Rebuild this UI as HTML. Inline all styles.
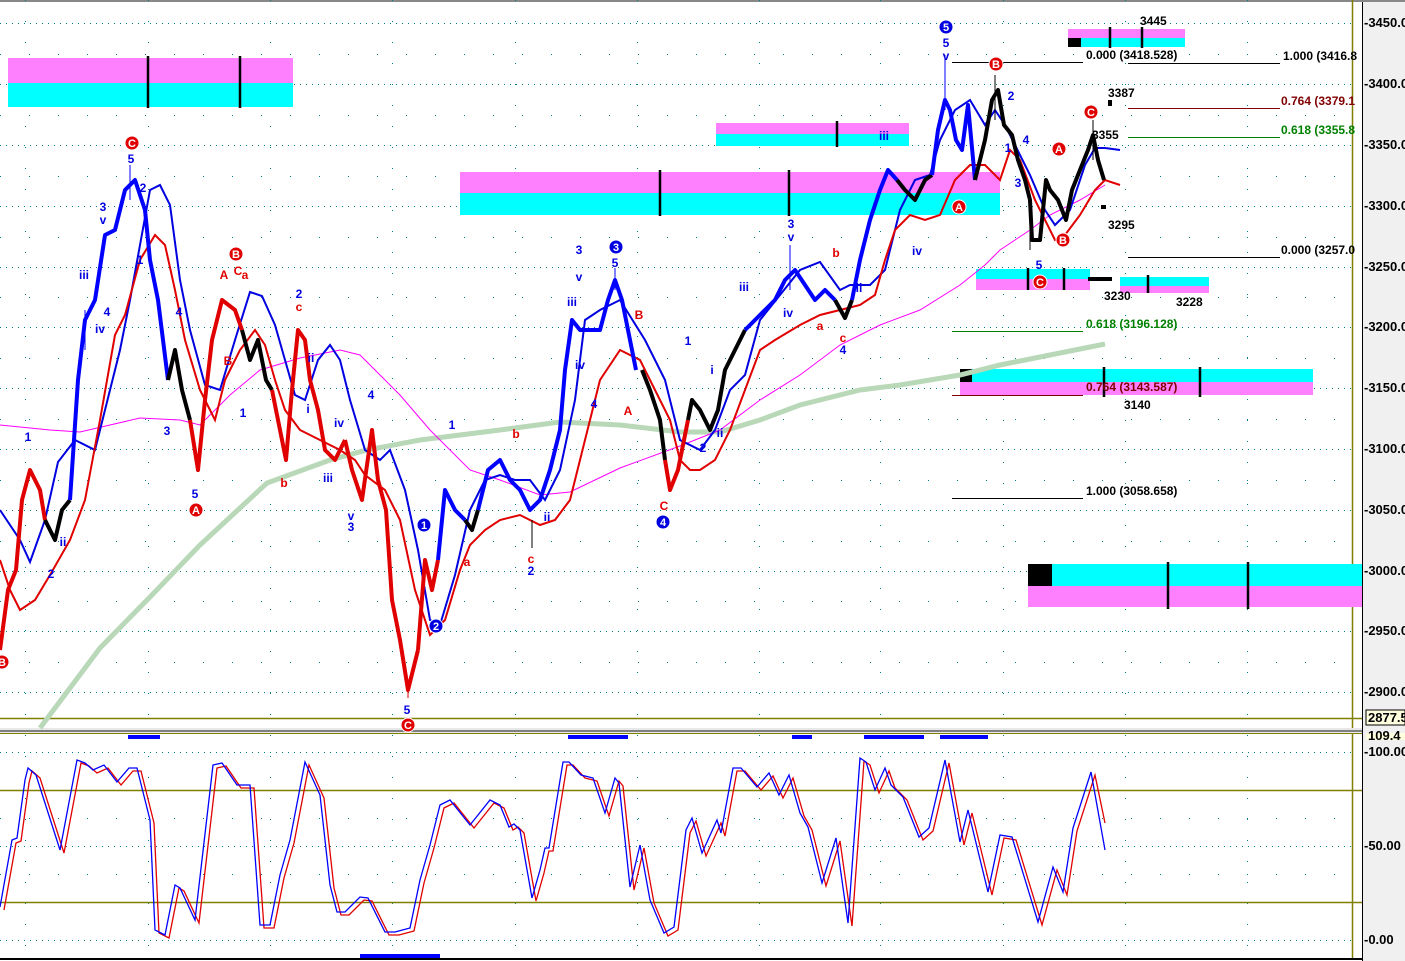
<!DOCTYPE html>
<html><head><meta charset="utf-8"><style>
html,body{margin:0;padding:0;background:#fff;}
svg{display:block;}
text{font-family:"Liberation Sans",sans-serif;font-weight:bold;}
</style></head><body>
<svg width="1405" height="961" viewBox="0 0 1405 961" xmlns="http://www.w3.org/2000/svg">
<rect x="0" y="0" width="1405" height="961" fill="#fff"/>
<rect x="1362" y="0" width="43" height="961" fill="#f0f0f0"/>
<line x1="1362.5" y1="0" x2="1362.5" y2="961" stroke="#000"/>
<line x1="0" y1="1" x2="1405" y2="1" stroke="#888" stroke-width="2"/>
<g stroke="#008080" stroke-dasharray="1,5" stroke-width="1">
<line x1="0" y1="23.5" x2="1352" y2="23.5"/><line x1="0" y1="84.5" x2="1352" y2="84.5"/>
<line x1="0" y1="145.5" x2="1352" y2="145.5"/><line x1="0" y1="206.5" x2="1352" y2="206.5"/>
<line x1="0" y1="267.5" x2="1352" y2="267.5"/><line x1="0" y1="327.5" x2="1352" y2="327.5"/>
<line x1="0" y1="388.5" x2="1352" y2="388.5"/><line x1="0" y1="449.5" x2="1352" y2="449.5"/>
<line x1="0" y1="510.5" x2="1352" y2="510.5"/><line x1="0" y1="571.5" x2="1352" y2="571.5"/>
<line x1="0" y1="631.5" x2="1352" y2="631.5"/><line x1="0" y1="692.5" x2="1352" y2="692.5"/>
<line x1="0" y1="752.5" x2="1352" y2="752.5"/><line x1="0" y1="846.5" x2="1352" y2="846.5"/><line x1="0" y1="940.5" x2="1352" y2="940.5"/>
</g>
<g stroke="#008080" stroke-dasharray="1,28" stroke-width="1">
<line x1="0" y1="54.5" x2="1352" y2="54.5"/><line x1="0" y1="115.5" x2="1352" y2="115.5"/><line x1="0" y1="176.5" x2="1352" y2="176.5"/>
<line x1="0" y1="237.5" x2="1352" y2="237.5"/><line x1="0" y1="297.5" x2="1352" y2="297.5"/><line x1="0" y1="358.5" x2="1352" y2="358.5"/>
<line x1="0" y1="419.5" x2="1352" y2="419.5"/><line x1="0" y1="480.5" x2="1352" y2="480.5"/><line x1="0" y1="541.5" x2="1352" y2="541.5"/>
<line x1="0" y1="601.5" x2="1352" y2="601.5"/><line x1="0" y1="662.5" x2="1352" y2="662.5"/>
<line x1="0" y1="818.5" x2="1352" y2="818.5"/><line x1="0" y1="874.5" x2="1352" y2="874.5"/>
</g>
<g stroke="#008080" stroke-dasharray="1,20" stroke-width="1">
<line x1="25.5" y1="0" x2="25.5" y2="958"/><line x1="148.5" y1="0" x2="148.5" y2="958"/><line x1="270.5" y1="0" x2="270.5" y2="958"/>
<line x1="392.5" y1="0" x2="392.5" y2="958"/><line x1="515.5" y1="0" x2="515.5" y2="958"/><line x1="637.5" y1="0" x2="637.5" y2="958"/>
<line x1="759.5" y1="0" x2="759.5" y2="958"/><line x1="880.5" y1="0" x2="880.5" y2="958"/><line x1="1003.5" y1="0" x2="1003.5" y2="958"/>
<line x1="1125.5" y1="0" x2="1125.5" y2="958"/><line x1="1247.5" y1="0" x2="1247.5" y2="958"/>
</g>
<g stroke="#808000" stroke-width="1.5">
<line x1="1352.5" y1="0" x2="1352.5" y2="958"/>
<line x1="0" y1="718.5" x2="1362" y2="718.5"/>
<line x1="0" y1="790.5" x2="1362" y2="790.5"/>
<line x1="0" y1="902.5" x2="1362" y2="902.5"/>
</g>
<rect x="0" y="728" width="1362" height="5" fill="#e8e8e8"/>
<line x1="0" y1="731" x2="1362" y2="731" stroke="#808080" stroke-width="2"/>
<line x1="0" y1="733.5" x2="1362" y2="733.5" stroke="#808000"/>
<line x1="0" y1="959" x2="1362" y2="959" stroke="#000" stroke-width="2"/>

<rect x="8" y="58" width="285" height="25" fill="#ff80ff"/><rect x="8" y="83" width="285" height="24" fill="#00ffff"/>
<rect x="716" y="123" width="193" height="11" fill="#ff80ff"/><rect x="716" y="134" width="193" height="12" fill="#00ffff"/>
<rect x="460" y="172" width="540" height="21" fill="#ff80ff"/><rect x="460" y="193" width="540" height="22" fill="#00ffff"/>
<rect x="1068" y="29" width="117" height="9" fill="#ff80ff"/><rect x="1068" y="38" width="117" height="9" fill="#00ffff"/><rect x="1068" y="38" width="13" height="9" fill="#000"/>
<rect x="976" y="269" width="114" height="10" fill="#00ffff"/><rect x="976" y="279" width="114" height="11" fill="#ff80ff"/>
<rect x="1120" y="277" width="89" height="9" fill="#00ffff"/><rect x="1120" y="286" width="89" height="7" fill="#ff80ff"/>
<rect x="960" y="369" width="353" height="13" fill="#00ffff"/><rect x="960" y="382" width="353" height="13" fill="#ff80ff"/><rect x="960" y="369" width="12" height="13" fill="#000"/>
<rect x="1028" y="564" width="334" height="22" fill="#00ffff"/><rect x="1028" y="586" width="334" height="21" fill="#ff80ff"/><rect x="1028" y="564" width="24" height="22" fill="#000"/>
<g stroke="#000" stroke-width="2.5">
<line x1="148" y1="56" x2="148" y2="108"/><line x1="240" y1="56" x2="240" y2="108"/>
<line x1="837" y1="121" x2="837" y2="147"/><line x1="660" y1="170" x2="660" y2="216"/><line x1="789" y1="170" x2="789" y2="216"/>
<line x1="1110" y1="27" x2="1110" y2="48"/><line x1="1142" y1="27" x2="1142" y2="48"/>
<line x1="1028" y1="268" x2="1028" y2="290"/><line x1="1064" y1="268" x2="1064" y2="290"/><line x1="1148" y1="275" x2="1148" y2="293"/>
<line x1="1104" y1="367" x2="1104" y2="397"/><line x1="1200" y1="367" x2="1200" y2="397"/>
<line x1="1168" y1="562" x2="1168" y2="609"/><line x1="1248" y1="562" x2="1248" y2="609"/>
<line x1="1088" y1="279" x2="1112" y2="279" stroke-width="4"/>
</g>
<g stroke-width="1">
<line x1="952" y1="62.5" x2="1083" y2="62.5" stroke="#000"/>
<line x1="1128" y1="63.5" x2="1280" y2="63.5" stroke="#000"/>
<line x1="1128" y1="108.5" x2="1280" y2="108.5" stroke="#800000"/>
<line x1="1128" y1="137.5" x2="1280" y2="137.5" stroke="#008000"/>
<line x1="1128" y1="257.5" x2="1280" y2="257.5" stroke="#000"/>
<line x1="952" y1="331.5" x2="1083" y2="331.5" stroke="#008000"/>
<line x1="952" y1="395.5" x2="1083" y2="395.5" stroke="#800000"/>
<line x1="952" y1="498.5" x2="1083" y2="498.5" stroke="#000"/>
</g>
<g font-size="12">
<text x="1086" y="59" fill="#000">0.000 (3418.528)</text>
<text x="1283" y="60" fill="#000">1.000 (3416.8</text>
<text x="1281" y="105" fill="#800000">0.764 (3379.1</text>
<text x="1281" y="134" fill="#008000">0.618 (3355.8</text>
<text x="1281" y="254" fill="#000">0.000 (3257.0</text>
<text x="1086" y="328" fill="#008000">0.618 (3196.128)</text>
<text x="1086" y="391" fill="#800000">0.764 (3143.587)</text>
<text x="1086" y="495" fill="#000">1.000 (3058.658)</text>
<text x="1140" y="25" fill="#000">3445</text>
<text x="1108" y="97" fill="#000">3387</text>
<text x="1092" y="139" fill="#000">3355</text>
<text x="1108" y="229" fill="#000">3295</text>
<text x="1104" y="300" fill="#000">3230</text>
<text x="1176" y="306" fill="#000">3228</text>
<text x="1124" y="409" fill="#000">3140</text>
</g>

<polyline fill="none" stroke="#b8d8b8" stroke-width="5" points="40,728 100,648 150,597 200,545 267,483 330,460 367,450 420,440 500,430 560,422 620,425 680,432 720,432 760,420 800,405 860,390 900,385 960,375 1000,365 1050,355 1105,344"/>
<polyline fill="none" stroke="#ff00ff" stroke-width="1" points="0,425 50,430 80,432 110,425 140,418 180,420 200,425 230,395 260,370 300,358 340,350 360,355 400,395 430,430 470,470 500,480 540,495 570,492 620,468 680,446 720,430 760,400 800,375 840,345 880,325 920,310 960,285 985,265 1000,250 1030,230 1050,215 1080,200 1105,185"/>
<polyline fill="none" stroke="#0000e0" stroke-width="2" points="0,510 20,540 30,562 45,520 58,462 75,440 95,450 110,390 120,350 130,300 150,190 160,185 170,205 180,280 190,330 205,385 220,390 235,340 250,292 262,296 275,325 285,360 295,395 305,400 318,360 330,345 340,360 350,400 365,450 380,460 390,450 405,490 418,550 430,620 440,625 455,575 470,510 485,480 500,475 515,480 530,480 545,500 560,470 575,400 585,320 600,310 620,300 645,340 665,380 680,440 700,450 715,430 730,390 745,375 760,320 780,295 800,270 820,262 840,290 850,285 870,285 885,270 900,210 915,180 930,175 940,140 955,110 970,100 985,125 995,110 1005,125 1015,145 1030,175 1045,210 1055,225 1070,210 1085,165 1095,148 1105,148 1120,150"/>
<polyline fill="none" stroke="#e00000" stroke-width="2" points="0,560 10,590 20,610 35,600 50,575 70,540 85,500 100,420 115,335 125,315 140,260 155,235 165,245 175,290 185,340 200,390 215,420 225,380 240,350 255,330 265,345 275,380 285,410 300,430 320,440 340,450 355,460 365,475 385,490 400,520 415,590 430,635 445,620 460,570 470,545 485,530 500,520 520,515 540,525 555,520 570,500 585,440 600,380 620,350 640,360 655,390 670,420 680,460 690,470 700,470 715,460 730,430 745,390 760,350 775,340 800,325 820,315 840,310 860,305 875,295 885,260 895,230 910,215 925,220 940,215 955,180 970,165 985,165 1000,180 1010,150 1020,160 1035,200 1055,240 1065,235 1080,215 1095,190 1105,180 1120,185"/>

<g fill="none" stroke-linejoin="round">
<polyline stroke="#e00000" stroke-width="4" points="0,650 8,590 16,570 22,500 30,470 40,490 45,520"/>
<polyline stroke="#000" stroke-width="4" points="45,520 55,540 62,510 70,500"/>
<polyline stroke="#0000ff" stroke-width="4" points="70,500 78,380 85,320 95,300 105,235 115,230 125,190 135,180 145,210 150,260 158,300 163,340 168,380"/>
<polyline stroke="#000" stroke-width="4" points="168,380 175,350 182,390 190,420"/>
<polyline stroke="#e00000" stroke-width="4" points="190,420 198,470 205,400 212,340 222,300 235,310 242,330"/>
<polyline stroke="#000" stroke-width="4" points="242,330 250,360 258,340 266,380 272,390"/>
<polyline stroke="#e00000" stroke-width="4" points="272,390 280,430 286,460 292,390 298,330 305,340 310,380 318,410 325,450 335,460 345,440"/>
<polyline stroke="#e00000" stroke-width="4" points="345,440 352,470 362,500 372,430 378,480 386,510 392,600 400,640 408,690 418,650"/>
<polyline stroke="#e00000" stroke-width="4" points="418,650 425,560 432,590 438,560"/>
<polyline stroke="#0000ff" stroke-width="4" points="438,560 445,490 455,510 465,520"/>
<polyline stroke="#000" stroke-width="4" points="465,520 472,530 478,510"/>
<polyline stroke="#0000ff" stroke-width="4" points="478,510 488,470 500,460 510,480 520,490 530,510 540,500 550,470 560,430 565,370 572,320 580,330 590,330 600,330 608,300 615,280 622,300 630,340 636,370"/>
<polyline stroke="#000" stroke-width="4" points="642,370 650,390 660,420 665,460"/>
<polyline stroke="#e00000" stroke-width="4" points="665,460 670,490 678,470 688,420"/>
<polyline stroke="#000" stroke-width="4" points="688,420 692,400 700,410 710,430 718,410 725,370 735,350 745,330"/>
<polyline stroke="#0000ff" stroke-width="4" points="745,330 755,320 765,310 775,300 785,280 795,270 805,285 815,300 825,290 835,300"/>
<polyline stroke="#000" stroke-width="4" points="835,300 845,318 852,300"/>
<polyline stroke="#0000ff" stroke-width="4" points="852,300 860,260 870,220 880,190 888,170 897,180"/>
<polyline stroke="#000" stroke-width="4" points="897,180 905,190 915,200 925,180 932,175"/>
<polyline stroke="#0000ff" stroke-width="4" points="932,175 938,130 945,100 950,110 956,140 962,150 968,105 975,180"/>
<polyline stroke="#000" stroke-width="4" points="975,180 985,140 992,100 998,90 1004,125 1012,135 1018,160 1025,180 1030,200 1032,240 1040,240 1046,180 1050,190 1058,200 1066,220 1072,190 1080,170 1088,150 1093,135 1098,160 1104,180"/>
</g>
<g stroke="#000" stroke-width="1">
<line x1="945" y1="55" x2="945" y2="110" stroke="#0000ff"/><line x1="995" y1="75" x2="995" y2="120"/>
<line x1="1030" y1="200" x2="1030" y2="250"/><line x1="1093" y1="120" x2="1093" y2="160"/>
<line x1="130" y1="165" x2="130" y2="200" stroke="#0000ff"/><line x1="408" y1="680" x2="408" y2="698" stroke="#e00000"/>
<line x1="615" y1="268" x2="615" y2="290" stroke="#0000ff"/><line x1="532" y1="520" x2="532" y2="548"/>
<line x1="85" y1="310" x2="85" y2="350" stroke="#0000ff"/><line x1="790" y1="245" x2="790" y2="290" stroke="#0000ff"/>
</g>
<rect x="1108" y="100" width="4" height="6" fill="#000"/><rect x="1101" y="205" width="5" height="4" fill="#000"/>

<g fill="none" stroke-width="1.3">
<polyline stroke="#e00000" transform="translate(4,3)" points="0,907 12,840 17,838 25,780 28,768 36,775 60,850 77,760 85,763 93,770 104,765 117,782 129,768 137,768 150,820 155,930 165,935 175,885 180,888 195,920 213,765 222,763 237,785 250,785 260,925 270,925 280,875 290,840 305,762 320,795 330,885 337,912 345,912 352,905 360,897 368,898 385,932 395,932 410,928 420,880 430,845 440,805 450,800 470,825 490,800 500,805 509,827 514,824 520,830 532,898 540,870 545,848 549,848 563,762 569,762 581,775 593,778 605,813 615,778 619,783 630,887 640,845 650,900 664,933 674,927 686,830 692,818 702,853 717,820 721,833 733,768 741,768 757,787 769,773 779,795 789,775 800,813 808,827 822,883 836,838 848,923 860,758 866,762 875,790 885,768 891,785 903,797 919,837 929,828 945,760 960,842 968,810 988,892 1000,835 1012,837 1038,922 1053,867 1063,892 1073,828 1091,772 1101,820"/>
<polyline stroke="#0000ff" points="0,907 12,840 17,838 25,780 28,768 36,775 60,850 77,760 85,763 93,770 104,765 117,782 129,768 137,768 150,820 155,930 165,935 175,885 180,888 195,920 213,765 222,763 237,785 250,785 260,925 270,925 280,875 290,840 305,762 320,795 330,885 337,912 345,912 352,905 360,897 368,898 385,932 395,932 410,928 420,880 430,845 440,805 450,800 470,825 490,800 500,805 509,827 514,824 520,830 532,898 540,870 545,848 549,848 563,762 569,762 581,775 593,778 605,813 615,778 619,783 630,887 640,845 650,900 664,933 674,927 686,830 692,818 702,853 717,820 721,833 733,768 741,768 757,787 769,773 779,795 789,775 800,813 808,827 822,883 836,838 848,923 860,758 866,762 875,790 885,768 891,785 903,797 919,837 929,828 945,760 960,842 968,810 988,892 1000,835 1012,837 1038,922 1053,867 1063,892 1073,828 1091,772 1105,850"/>
</g>
<g fill="#0000ff">
<rect x="128" y="735" width="32" height="4"/><rect x="568" y="735" width="60" height="4"/><rect x="792" y="735" width="20" height="4"/>
<rect x="864" y="735" width="60" height="4"/><rect x="940" y="735" width="48" height="4"/><rect x="360" y="954" width="80" height="4"/>
</g>

<g font-size="11" text-anchor="middle">
<g fill="#e00000" stroke="#fff" stroke-width="1">
<circle cx="132" cy="143" r="7"/><circle cx="236" cy="254" r="7"/><circle cx="196" cy="510" r="7"/><circle cx="408" cy="725" r="7"/>
<circle cx="996" cy="64" r="7"/><circle cx="1091" cy="112" r="7"/><circle cx="1059" cy="149" r="7"/><circle cx="959" cy="207" r="7"/>
<circle cx="1063" cy="240" r="7"/><circle cx="1040" cy="282" r="7"/><circle cx="2" cy="662" r="7"/>
</g>
<g fill="#0000e0" stroke="#fff" stroke-width="1">
<circle cx="946" cy="27" r="7"/><circle cx="616" cy="247" r="7"/><circle cx="424" cy="525" r="7"/><circle cx="436" cy="626" r="7"/><circle cx="663" cy="522" r="7"/>
</g>
<g fill="#fff">
<text x="132" y="147">C</text><text x="236" y="258">B</text><text x="196" y="514">A</text><text x="408" y="729">C</text>
<text x="996" y="68">B</text><text x="1091" y="116">C</text><text x="1059" y="153">A</text><text x="959" y="211">A</text>
<text x="1063" y="244">B</text><text x="1040" y="286">C</text><text x="2" y="666">B</text>
<text x="946" y="31">5</text><text x="616" y="251">3</text><text x="424" y="529">1</text><text x="436" y="630">2</text><text x="663" y="526">4</text>
</g>
</g>
<g font-size="12" text-anchor="middle" fill="#0000e0">
<text x="131" y="163">5</text><text x="103" y="211">3</text><text x="103" y="224">v</text><text x="84" y="279">iii</text><text x="107" y="316">4</text><text x="100" y="333">iv</text>
<text x="143" y="192">2</text><text x="140" y="264">1</text><text x="179" y="316">4</text><text x="167" y="435">3</text><text x="195" y="498">5</text><text x="243" y="417">1</text>
<text x="28" y="441">1</text><text x="51" y="578">2</text><text x="63" y="546">ii</text><text x="299" y="298">2</text><text x="311" y="362">ii</text><text x="308" y="413">i</text>
<text x="328" y="482">iii</text><text x="339" y="427">iv</text><text x="371" y="399">4</text><text x="351" y="520">v</text><text x="351" y="531">3</text><text x="407" y="714">5</text>
<text x="452" y="429">1</text><text x="531" y="575">2</text><text x="547" y="521">ii</text><text x="579" y="254">3</text><text x="579" y="281">v</text><text x="572" y="306">iii</text>
<text x="580" y="369">iv</text><text x="594" y="408">4</text><text x="615" y="267">5</text><text x="688" y="345">1</text><text x="703" y="452">2</text><text x="712" y="374">i</text>
<text x="720" y="437">ii</text><text x="744" y="291">iii</text><text x="791" y="228">3</text><text x="791" y="241">v</text><text x="788" y="317">iv</text><text x="843" y="354">4</text>
<text x="859" y="292">ii</text><text x="884" y="140">iii</text><text x="917" y="255">iv</text><text x="946" y="47">5</text><text x="946" y="60">v</text>
<text x="1011" y="100">2</text><text x="1008" y="152">1</text><text x="1026" y="144">4</text><text x="1018" y="187">3</text><text x="1039" y="269">5</text>
</g>
<g font-size="12" text-anchor="middle" fill="#e00000">
<text x="224" y="279">A</text><text x="238" y="275">C</text><text x="245" y="279">a</text><text x="228" y="365">B</text><text x="299" y="311">c</text><text x="284" y="487">b</text>
<text x="467" y="566">a</text><text x="516" y="438">b</text><text x="531" y="563">c</text><text x="628" y="415">A</text><text x="639" y="319">B</text><text x="664" y="510">C</text>
<text x="820" y="330">a</text><text x="836" y="257">b</text><text x="843" y="342">c</text>
</g>

<g font-size="13" fill="#000">
<text x="1364" y="27">-3450.0</text><text x="1364" y="88">-3400.0</text><text x="1364" y="149">-3350.0</text><text x="1364" y="210">-3300.0</text>
<text x="1364" y="271">-3250.0</text><text x="1364" y="331">-3200.0</text><text x="1364" y="392">-3150.0</text><text x="1364" y="453">-3100.0</text>
<text x="1364" y="514">-3050.0</text><text x="1364" y="575">-3000.0</text><text x="1364" y="635">-2950.0</text><text x="1364" y="696">-2900.0</text>
<rect x="1366" y="710" width="39" height="15" fill="#ffffe0" stroke="#000"/><text x="1368" y="722">2877.5</text>
<rect x="1366" y="733" width="39" height="7" fill="#ffffe0"/><text x="1368" y="740">109.4</text>
<text x="1364" y="756">-100.00</text><text x="1364" y="850">-50.00</text><text x="1364" y="944">-0.00</text>
</g>
</svg>
</body></html>
